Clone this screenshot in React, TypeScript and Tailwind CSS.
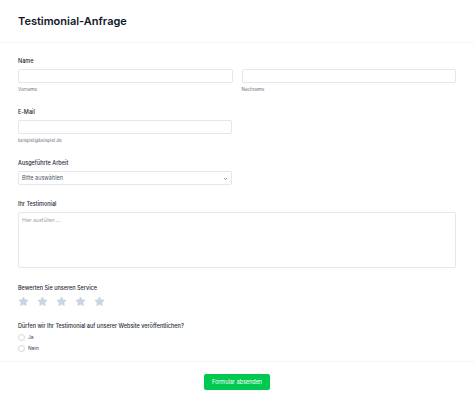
import { Star } from 'lucide-react'

function Label({ children }: { children: React.ReactNode }) {
  return <p className="text-[5.5px] font-medium text-gray-800 leading-[8px] mb-[4px]">{children}</p>
}

function Helper({ children }: { children: React.ReactNode }) {
  return <p className="text-[4.5px] text-gray-500 leading-[6px] mt-[4px]">{children}</p>
}

export default function App() {
  return (
    <div className="w-[474px] h-[402px] bg-white flex flex-col" style={{ fontFamily: 'Inter, "Noto Sans", sans-serif' }}>
      <div className="h-[43px] border-b border-gray-100 px-[18px] flex items-center">
        <h1 className="text-[11px] font-semibold text-gray-900">Testimonial-Anfrage</h1>
      </div>

      <div className="px-[18px] pt-[14px] flex flex-col">
        <Label>Name</Label>
        <div className="grid grid-cols-2 gap-[9px]">
          <div>
            <div className="h-[14px] border border-gray-200 rounded-[2px]" />
            <Helper>Vorname</Helper>
          </div>
          <div>
            <div className="h-[14px] border border-gray-200 rounded-[2px]" />
            <Helper>Nachname</Helper>
          </div>
        </div>

        <div className="mt-[15px] w-[214px]">
          <Label>E-Mail</Label>
          <div className="h-[14px] border border-gray-200 rounded-[2px]" />
          <Helper>beispiel@beispiel.de</Helper>
        </div>

        <div className="mt-[15px] w-[214px]">
          <Label>Ausgeführte Arbeit</Label>
          <div className="h-[14px] border border-gray-200 rounded-[2px] flex items-center justify-between px-[3px]">
            <span className="text-[5.5px] text-gray-600">Bitte auswählen</span>
            <svg width="5" height="5" viewBox="0 0 10 10" className="text-gray-500">
              <path d="M2 4l3 3 3-3" fill="none" stroke="currentColor" strokeWidth="1.5" />
            </svg>
          </div>
        </div>

        <div className="mt-[15px]">
          <Label>Ihr Testimonial</Label>
          <div className="h-[56px] border border-gray-200 rounded-[2px] px-[3px] pt-[4px]">
            <span className="text-[5px] text-gray-400 leading-[6px] block">Hier ausfüllen ...</span>
          </div>
        </div>

        <div className="mt-[16px]">
          <Label>Bewerten Sie unseren Service</Label>
          <div className="flex gap-[8px]">
            {[0, 1, 2, 3, 4].map(i => (
              <Star key={i} size={11} className="text-slate-300 fill-slate-300" strokeWidth={1} />
            ))}
          </div>
        </div>

        <div className="mt-[15px]">
          <Label>Dürfen wir Ihr Testimonial auf unserer Website veröffentlichen?</Label>
          <div className="flex flex-col gap-[4px]">
            {['Ja', 'Nein'].map(o => (
              <div key={o} className="flex items-center gap-[3px]">
                <span className="w-[7px] h-[7px] rounded-full border border-gray-300" />
                <span className="text-[5px] text-gray-700 leading-[7px]">{o}</span>
              </div>
            ))}
          </div>
        </div>
      </div>

      <div className="mt-auto border-t border-gray-100 h-[41px] flex items-center justify-center">
        <button className="bg-green-500 text-white text-[5.5px] h-[16px] px-[8px] rounded-[2px]">Formular absenden</button>
      </div>
    </div>
  )
}
